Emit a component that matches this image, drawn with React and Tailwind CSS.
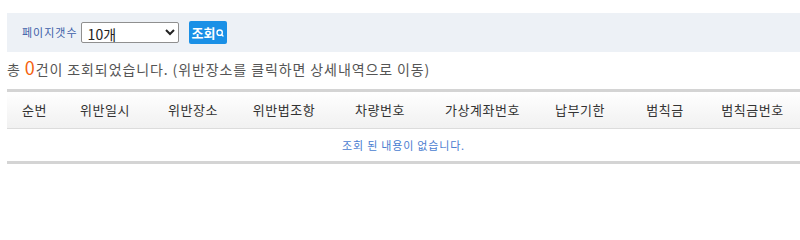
import { Search } from "lucide-react";

const columns = [
  { label: "순번", w: "w-[55px]" },
  { label: "위반일시", w: "w-[86px]" },
  { label: "위반장소", w: "w-[90px]" },
  { label: "위반법조항", w: "w-[92px]" },
  { label: "차량번호", w: "w-[100px]" },
  { label: "가상계좌번호", w: "w-[105px]" },
  { label: "납부기한", w: "w-[90px]" },
  { label: "범칙금", w: "w-[80px]" },
  { label: "범칙금번호", w: "w-[95px]" },
];

const App = () => {
  return (
    <div className="min-h-[201px] bg-white pl-[7px] pt-[13px] font-['Noto_Sans_CJK_KR',sans-serif]">
      {/* Search bar */}
      <div className="flex h-[39px] items-center bg-[#edf1f6] pl-[15px]">
        <span className="text-[11px] tracking-[1px] text-[#3b5ea8]">페이지갯수</span>
        <select
          defaultValue="10"
          className="ml-[3px] h-[21px] w-[98px] rounded-[2px] border border-[#8f8f8f] bg-white pl-[2px] text-[14px] text-[#222]"
        >
          <option value="10">10개</option>
          <option value="20">20개</option>
          <option value="50">50개</option>
        </select>
        <button className="ml-[10px] flex h-[23px] items-center rounded-[2px] bg-[#1a90e6] px-[3px] text-[13px] font-bold text-white">
          조회
          <Search className="h-[8px] w-[8px]" strokeWidth={4} />
        </button>
      </div>

      {/* Result count */}
      <p className="mt-[5px] text-[14px] leading-[20px] tracking-[0.9px] text-[#555]">
        총 <span className="text-[18px] text-[#f5620f]">0</span>건이 조회되었습니다. (위반장소를 클릭하면 상세내역으로 이동)
      </p>

      {/* Table */}
      <table className="mt-[10px] w-[793px] table-fixed border-collapse border-t-[3px] border-b-[3px] border-[#d4d4d4]">
        <thead>
          <tr className="h-[38px] border-b border-[#dcdcdc] bg-gradient-to-b from-white to-[#f1f1f1]">
            {columns.map((col) => (
              <th key={col.label} className={`${col.w} text-center text-[13px] font-normal tracking-[0.5px] text-[#333]`}>
                {col.label}
              </th>
            ))}
          </tr>
        </thead>
        <tbody>
          <tr className="h-[34px]">
            <td colSpan={9} className="text-center text-[11px] tracking-[0.8px] text-[#4a7dd0]">
              조회 된 내용이 없습니다.
            </td>
          </tr>
        </tbody>
      </table>
    </div>
  );
};

export default App;
